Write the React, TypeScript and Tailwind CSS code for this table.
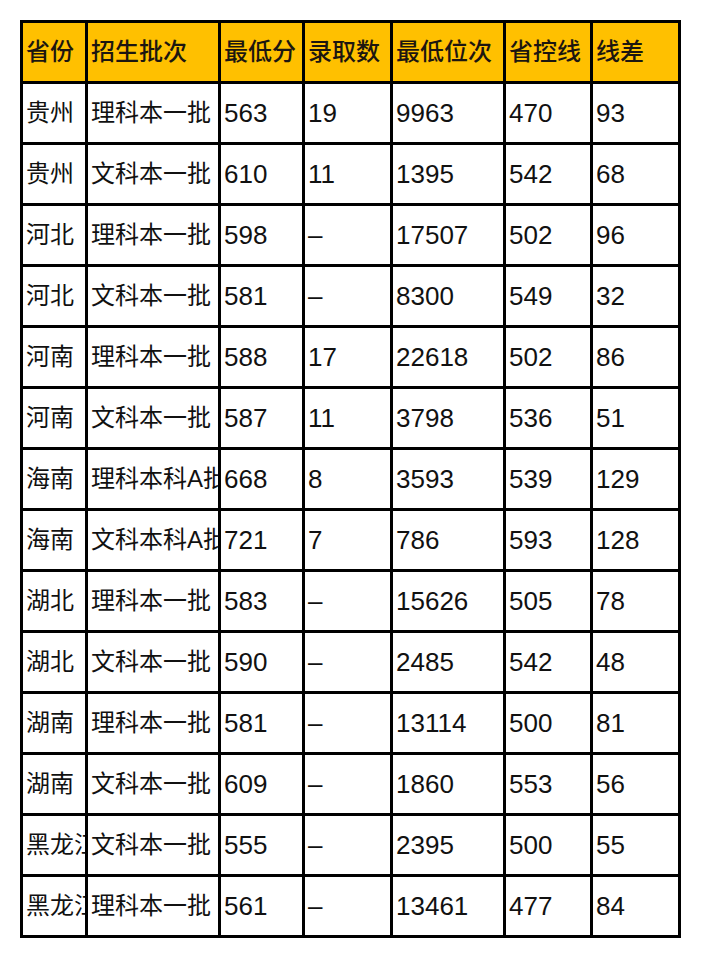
const HEAD = ["省份", "招生批次", "最低分", "录取数", "最低位次", "省控线", "线差"];

const ROWS: string[][] = [
  ["贵州", "理科本一批", "563", "19", "9963", "470", "93"],
  ["贵州", "文科本一批", "610", "11", "1395", "542", "68"],
  ["河北", "理科本一批", "598", "–", "17507", "502", "96"],
  ["河北", "文科本一批", "581", "–", "8300", "549", "32"],
  ["河南", "理科本一批", "588", "17", "22618", "502", "86"],
  ["河南", "文科本一批", "587", "11", "3798", "536", "51"],
  ["海南", "理科本科A批", "668", "8", "3593", "539", "129"],
  ["海南", "文科本科A批", "721", "7", "786", "593", "128"],
  ["湖北", "理科本一批", "583", "–", "15626", "505", "78"],
  ["湖北", "文科本一批", "590", "–", "2485", "542", "48"],
  ["湖南", "理科本一批", "581", "–", "13114", "500", "81"],
  ["湖南", "文科本一批", "609", "–", "1860", "553", "56"],
  ["黑龙江", "文科本一批", "555", "–", "2395", "500", "55"],
  ["黑龙江", "理科本一批", "561", "–", "13461", "477", "84"],
];

const WIDTHS = ["w-[65px]", "w-[133px]", "w-[84px]", "w-[88px]", "w-[113px]", "w-[87px]", "w-[88px]"];

export default function App() {
  return (
    <div className="min-h-[975px] w-[708px] bg-white pl-[20px] pt-[20px] font-['Liberation_Sans','Noto_Sans_CJK_SC',sans-serif] text-[#111]">
      <table className="w-[661px] table-fixed border-collapse border-[3px] border-black">
        <colgroup>
          {WIDTHS.map((w, i) => (
            <col key={i} className={w} />
          ))}
        </colgroup>
        <thead>
          <tr className="h-[61px] bg-[#ffc000]">
            {HEAD.map((h) => (
              <th
                key={h}
                className="overflow-hidden whitespace-nowrap border-[3px] border-black pl-[3px] text-left text-[24px] font-medium text-[#1c1610]"
              >
                {h}
              </th>
            ))}
          </tr>
        </thead>
        <tbody>
          {ROWS.map((row, r) => (
            <tr key={r} className="h-[61px]">
              {row.map((cell, c) => (
                <td
                  key={c}
                  className={
                    "overflow-hidden whitespace-nowrap border-[3px] border-black pl-[3px] text-left " +
                    (c < 2 ? "text-[24px]" : "text-[26px]")
                  }
                >
                  {cell}
                </td>
              ))}
            </tr>
          ))}
        </tbody>
      </table>
    </div>
  );
}
